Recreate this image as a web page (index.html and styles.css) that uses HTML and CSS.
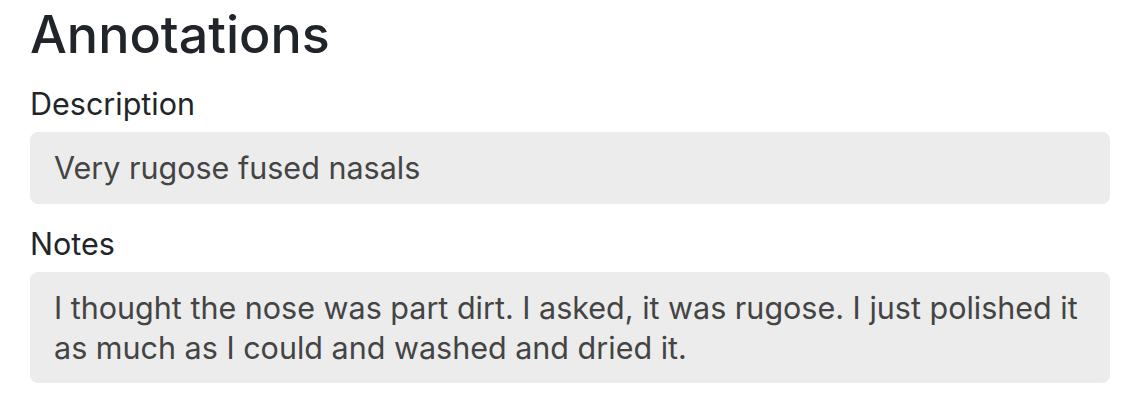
FILE: index.html
```html
<!DOCTYPE html>
<html>
<head>
<meta charset="utf-8">
<link rel="stylesheet" href="styles.css">
</head>
<body>
<section class="annotations">
  <h2 class="title">Annotations</h2>
  <div class="field">
    <div class="label">Description</div>
    <div class="value">Very rugose fused nasals</div>
  </div>
  <div class="field">
    <div class="label">Notes</div>
    <div class="value">I thought the nose was part dirt. I asked, it was rugose. I just polished it as much as I could and washed and dried it.</div>
  </div>
</section>
</body>
</html>
```

FILE: styles.css
```css
html, body {
  margin: 0;
  padding: 0;
  background: #ffffff;
}
body {
  font-family: Inter, "Liberation Sans", sans-serif;
  color: #212529;
}
.annotations {
  width: 1080px;
  margin-left: 30px;
  display: flex;
  flex-direction: column;
}
.title {
  margin: 0;
  font-size: 52px;
  font-weight: 500;
  line-height: 70px;
}
.field {
  display: flex;
  flex-direction: column;
  margin-top: 20.5px;
}
.title + .field {
  margin-top: 14px;
}
.label {
  font-size: 30.5px;
  line-height: 40px;
  margin-bottom: 8px;
}
.value {
  background: #ececec;
  border-radius: 8px;
  padding: 16px 24px;
  font-size: 30.5px;
  line-height: 39.5px;
  color: #444444;
}
```
